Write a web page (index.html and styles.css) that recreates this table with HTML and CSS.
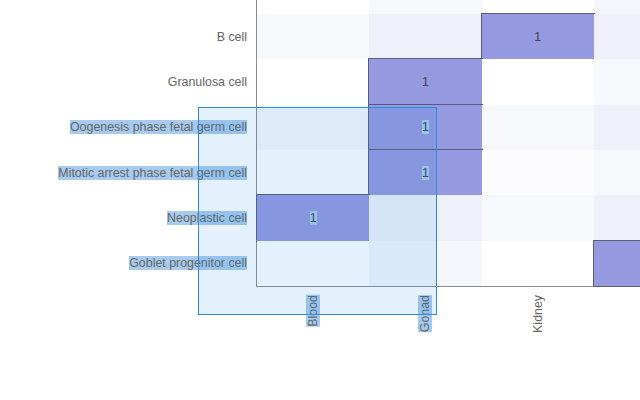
FILE: index.html
```html
<!DOCTYPE html>
<html>
<head>
<meta charset="utf-8">
<link rel="stylesheet" href="styles.css">
</head>
<body>
<div class="chart">
  <div class="ylabels">
    <div class="ylab"></div>
    <div class="ylab"><span>B cell</span></div>
    <div class="ylab"><span>Granulosa cell</span></div>
    <div class="ylab"><span class="sel">Oogenesis phase fetal germ cell</span></div>
    <div class="ylab"><span class="sel">Mitotic arrest phase fetal germ cell</span></div>
    <div class="ylab"><span class="sel">Neoplastic cell</span></div>
    <div class="ylab"><span class="sel">Goblet progenitor cell</span></div>
  </div>
  <div class="plot">
    <div class="cell t0"></div><div class="cell t1"></div><div class="cell t0"></div><div class="cell t1b"></div>
    <div class="cell t1"></div><div class="cell t2"></div><div class="cell on"><span>1</span></div><div class="cell t2"></div>
    <div class="cell t0"></div><div class="cell on"><span>1</span></div><div class="cell t0"></div><div class="cell t1"></div>
    <div class="cell t1"></div><div class="cell on"><span class="sel">1</span></div><div class="cell t1"></div><div class="cell t2"></div>
    <div class="cell t0"></div><div class="cell on"><span class="sel">1</span></div><div class="cell t05"></div><div class="cell t1"></div>
    <div class="cell on"><span class="sel">1</span></div><div class="cell t2"></div><div class="cell t1"></div><div class="cell t2"></div>
    <div class="cell t0"></div><div class="cell t1b"></div><div class="cell t0"></div><div class="cell on"></div>
  </div>
  <div class="corner"></div>
  <div class="xlabels">
    <div class="xlab"><span class="sel">Blood</span></div>
    <div class="xlab"><span class="sel">Gonad</span></div>
    <div class="xlab"><span>Kidney</span></div>
    <div class="xlab"></div>
  </div>
  <div class="selbox"></div>
</div>
</body>
</html>
```
FILE: styles.css
```css
html, body {
  margin: 0;
  padding: 0;
  background: #ffffff;
  width: 640px;
  height: 400px;
  overflow: hidden;
}
.chart {
  position: relative;
  display: grid;
  grid-template-columns: 256px 450px;
  grid-template-rows: auto auto;
  margin-top: -31.33px;
  font-family: "Liberation Sans", Arial, sans-serif;
  font-size: 12.4px;
  width: 706px;
}
.ylabels {
  display: grid;
  grid-template-rows: repeat(7, 45.33px);
}
.ylab {
  display: flex;
  align-items: center;
  justify-content: flex-end;
  padding-right: 9px;
  color: #666;
  white-space: nowrap;
}
.sel {
  background: #a7cbee;
}
.plot {
  display: grid;
  grid-template-columns: repeat(4, 112.3px);
  grid-template-rows: repeat(7, 45.33px);
  border-left: 1px solid #8a8a95;
  border-bottom: 1px solid #8a8a95;
}
.cell {
  display: flex;
  align-items: center;
  justify-content: center;
  color: #444;
}
.t0 { background: #ffffff; }
.t05 { background: #fcfcfe; }
.t1 { background: #f7f8fc; }
.t1b { background: #f4f6fc; }
.t2 { background: #eef1fa; }
.on {
  background: #9599e0;
  outline: 1px solid #5b5b7a;
  outline-offset: -0.5px;
}
.xlabels {
  display: grid;
  grid-template-columns: repeat(4, 112.3px);
  padding-left: 1px;
  padding-top: 8px;
  height: 60px;
}
.xlab {
  display: flex;
  justify-content: center;
  align-items: flex-start;
  color: #666;
}
.xlab span {
  writing-mode: vertical-rl;
  transform: rotate(180deg);
  line-height: 14px;
}
.selbox {
  position: absolute;
  left: 198px;
  top: 138.6px;
  width: 237px;
  height: 205.5px;
  border: 1px solid #2a8ae6;
  background: rgba(30, 136, 229, 0.12);
}
```
